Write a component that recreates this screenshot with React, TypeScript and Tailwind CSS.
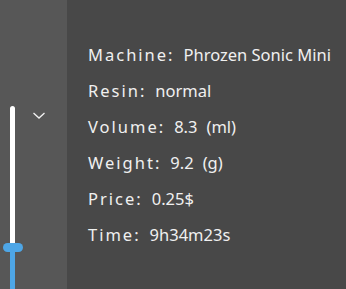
import React from 'react';

const rows: { label: string; value: string; unit?: string }[] = [
  { label: 'Machine:', value: 'Phrozen Sonic Mini' },
  { label: 'Resin:', value: 'normal' },
  { label: 'Volume:', value: '8.3', unit: '(ml)' },
  { label: 'Weight:', value: '9.2', unit: '(g)' },
  { label: 'Price:', value: '0.25$' },
  { label: 'Time:', value: '9h34m23s' },
];

const App: React.FC = () => {
  return (
    <div className="flex h-[289px] w-[346px] overflow-hidden bg-[#484848]" style={{ fontFamily: '"Noto Sans", "Open Sans", sans-serif' }}>
      {/* layer slider */}
      <div className="relative h-full w-[67px] shrink-0 bg-[#575757]">
        <div className="absolute left-[10px] top-[106px] h-[140px] w-[5px] rounded-t-full bg-white" />
        <div className="absolute left-[10px] top-[246px] h-[43px] w-[5px] bg-[#4ea6e6]" />
        <div className="absolute left-[3px] top-[243px] h-[9px] w-[20px] rounded-full bg-[#4ea6e6]" />
        <svg className="absolute left-[32px] top-[110px]" width="14" height="10" viewBox="0 0 14 10" fill="none">
          <path d="M1.5 3 L7 8 L12.5 3" stroke="#f2f2f2" strokeWidth="1.3" />
        </svg>
      </div>
      {/* info */}
      <div className="flex flex-col gap-[13px] pl-[21px] pt-[43px] text-[16.5px] leading-[23px] text-[#f0f0f0]">
        {rows.map((r) => (
          <div key={r.label} className="flex whitespace-nowrap">
            <span className="tracking-[2px]">{r.label}</span>
            <span className="ml-[9px]">{r.value}</span>
            {r.unit && <span className="ml-[9px]">{r.unit}</span>}
          </div>
        ))}
      </div>
    </div>
  );
};

export default App;
